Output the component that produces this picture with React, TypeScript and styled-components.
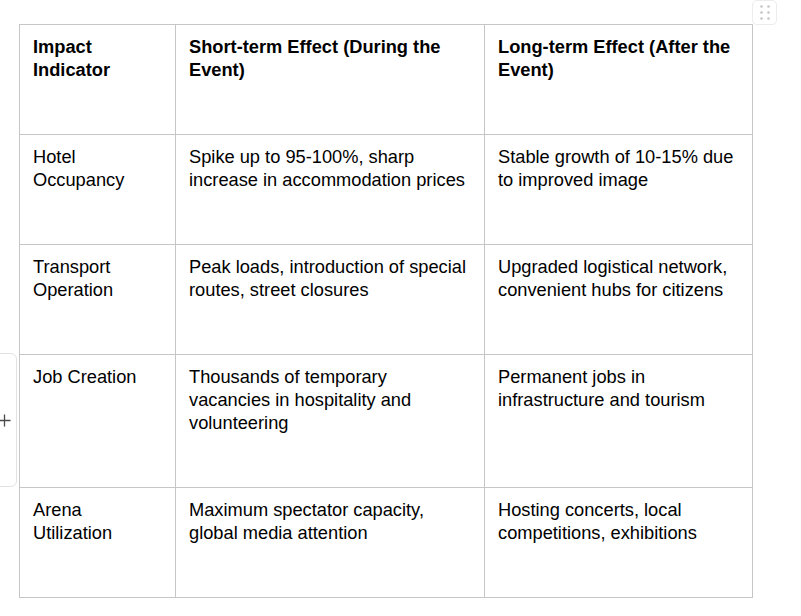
import styled, { createGlobalStyle } from 'styled-components';

const GlobalStyle = createGlobalStyle`
  html, body {
    margin: 0;
    padding: 0;
    background: #ffffff;
  }
  body {
    font-family: "Liberation Sans", Arial, sans-serif;
    color: #000000;
  }
`;

const Page = styled.div`
  position: relative;
  width: 801px;
  height: 616px;
  overflow: hidden;
  padding: 24px 0 0 19px;
  box-sizing: border-box;
`;

const Table = styled.table`
  border-collapse: collapse;
  table-layout: fixed;
  width: 734px;
  font-size: 18.25px;
  line-height: 23px;
`;

const Cell = styled.td<{ header?: boolean }>`
  border: 1px solid #c6c6c6;
  padding: 10px 13px 53px;
  vertical-align: top;
  font-weight: ${(props) => (props.header ? 700 : 400)};
  color: #000000;
  word-wrap: break-word;
`;

const RowHandle = styled.div`
  position: absolute;
  left: -10px;
  top: 353px;
  width: 27px;
  height: 134px;
  box-sizing: border-box;
  border: 1px solid #e2e2e2;
  border-radius: 0 6px 6px 0;
  background: #ffffff;
  display: flex;
  align-items: center;
  justify-content: flex-start;
  padding-left: 7px;
`;

const DragHandle = styled.div`
  position: absolute;
  left: 752px;
  top: 0;
  width: 25px;
  height: 25px;
  box-sizing: border-box;
  border: 1px solid #ececec;
  border-radius: 5px;
  background: #ffffff;
  display: flex;
  align-items: center;
  justify-content: center;
`;

const columns = [156, 309, 268];

const rows: string[][] = [
  ['Hotel Occupancy', 'Spike up to 95-100%, sharp increase in accommodation prices', 'Stable growth of 10-15% due to improved image'],
  ['Transport Operation', 'Peak loads, introduction of special routes, street closures', 'Upgraded logistical network, convenient hubs for citizens'],
  ['Job Creation', 'Thousands of temporary vacancies in hospitality and volunteering', 'Permanent jobs in infrastructure and tourism'],
  ['Arena Utilization', 'Maximum spectator capacity, global media attention', 'Hosting concerts, local competitions, exhibitions'],
];

const headers = ['Impact Indicator', 'Short-term Effect (During the Event)', 'Long-term Effect (After the Event)'];

const App = () => {
  return (
    <>
      <GlobalStyle />
      <Page>
        <Table>
          <colgroup>
            {columns.map((w, i) => (
              <col key={i} style={{ width: w }} />
            ))}
          </colgroup>
          <tbody>
            <tr>
              {headers.map((h) => (
                <Cell key={h} header>
                  {h}
                </Cell>
              ))}
            </tr>
            {rows.map((row) => (
              <tr key={row[0]}>
                {row.map((text) => (
                  <Cell key={text}>{text}</Cell>
                ))}
              </tr>
            ))}
          </tbody>
        </Table>

        <RowHandle>
          <svg width="13" height="13" viewBox="0 0 13 13">
            <path d="M6.5 0.5v12M0.5 6.5h12" stroke="#4a4a4a" strokeWidth="1.3" />
          </svg>
        </RowHandle>

        <DragHandle>
          <svg width="10" height="15" viewBox="0 0 10 15">
            {[1.5, 7.5, 13.5].map((y) =>
              [1.5, 8.5].map((x) => <circle key={`${x}-${y}`} cx={x} cy={y} r="1.3" fill="#c4c4c4" />)
            )}
          </svg>
        </DragHandle>
      </Page>
    </>
  );
};

export default App;
